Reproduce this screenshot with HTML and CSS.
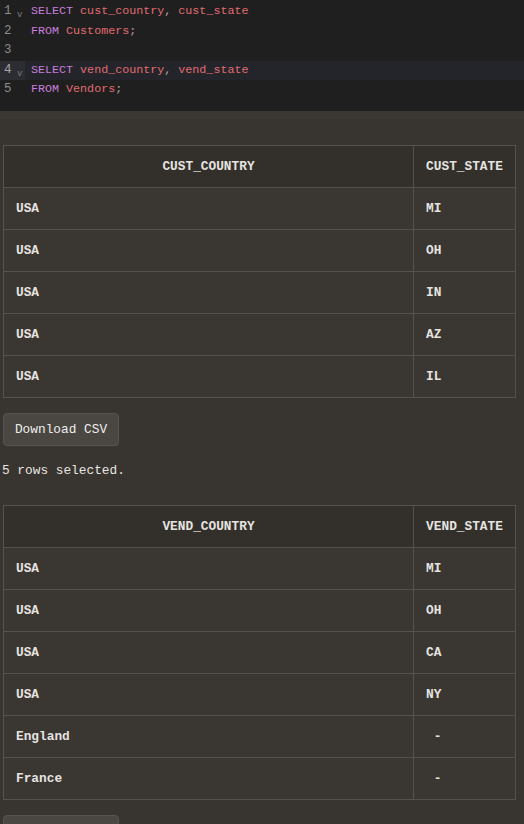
FILE: index.html
```html
<!DOCTYPE html>
<html>
<head>
<meta charset="utf-8">
<link rel="stylesheet" href="styles.css">
</head>
<body>
<div class="editor">
  <div class="line"><span class="gutter"><span class="num">1</span><span class="fold">v</span></span><span class="code"><span class="kw">SELECT</span> <span class="id">cust_country</span><span class="pn">,</span> <span class="id">cust_state</span></span></div>
  <div class="line"><span class="gutter"><span class="num">2</span><span class="fold"></span></span><span class="code"><span class="kw">FROM</span> <span class="id">Customers</span><span class="pn">;</span></span></div>
  <div class="line"><span class="gutter"><span class="num">3</span><span class="fold"></span></span><span class="code"></span></div>
  <div class="line active"><span class="gutter"><span class="num">4</span><span class="fold">v</span></span><span class="code"><span class="kw">SELECT</span> <span class="id">vend_country</span><span class="pn">,</span> <span class="id">vend_state</span></span></div>
  <div class="line"><span class="gutter"><span class="num">5</span><span class="fold"></span></span><span class="code"><span class="kw">FROM</span> <span class="id">Vendors</span><span class="pn">;</span></span></div>
</div>
<div class="splitter"></div>
<main class="results">
  <table class="grid">
    <thead><tr><th>CUST_COUNTRY</th><th class="narrow">CUST_STATE</th></tr></thead>
    <tbody>
      <tr><td>USA</td><td>MI</td></tr>
      <tr><td>USA</td><td>OH</td></tr>
      <tr><td>USA</td><td>IN</td></tr>
      <tr><td>USA</td><td>AZ</td></tr>
      <tr><td>USA</td><td>IL</td></tr>
    </tbody>
  </table>
  <button class="btn">Download CSV</button>
  <div class="status">5 rows selected.</div>
  <table class="grid">
    <thead><tr><th>VEND_COUNTRY</th><th class="narrow">VEND_STATE</th></tr></thead>
    <tbody>
      <tr><td>USA</td><td>MI</td></tr>
      <tr><td>USA</td><td>OH</td></tr>
      <tr><td>USA</td><td>CA</td></tr>
      <tr><td>USA</td><td>NY</td></tr>
      <tr><td>England</td><td>&nbsp;-</td></tr>
      <tr><td>France</td><td>&nbsp;-</td></tr>
    </tbody>
  </table>
  <button class="btn">Download CSV</button>
</main>
</body>
</html>
```
FILE: styles.css
```css
html, body {
  margin: 0;
  padding: 0;
  background: #38342f;
  overflow: hidden;
}
body {
  font-family: "Liberation Mono", "DejaVu Sans Mono", monospace;
  color: #e4e2df;
}
.editor {
  background: #1f1f1f;
  padding: 2px 0 11px;
  font-size: 11.7px;
}
.line {
  display: flex;
  height: 19.6px;
  line-height: 19.6px;
}
.line.active {
  background: #24252a;
}
.gutter {
  width: 31px;
  display: flex;
  flex: none;
}
.line.active .gutter {
  background: #2b2d32;
  width: 25px;
  margin-right: 6px;
}
.num {
  width: 13px;
  padding-left: 4px;
  color: #8b8b8b;
  font-size: 12.5px;
}
.line.active .num {
  color: #a6a6a6;
}
.fold {
  color: #777a80;
  font-size: 9px;
  line-height: 26px;
  width: 8px;
}
.code {
  white-space: pre;
}
.kw { color: #c77ddb; }
.id { color: #e06c71; }
.pn { color: #b8a8a8; }
.splitter {
  height: 6px;
  background: #3a3733;
  border-bottom: 1px solid #3f3c38;
}
.results {
  padding: 27px 0 0 3px;
}
.grid {
  width: 513px;
  border-collapse: collapse;
  font-size: 12.8px;
  font-weight: bold;
  margin-bottom: 15px;
}
.grid th, .grid td {
  border: 1px solid #55514c;
  padding: 12px 12px;
  line-height: 17px;
  height: 17px;
  white-space: nowrap;
}
.grid th {
  background: #33302c;
  text-align: center;
  color: #e6e4e0;
}
.grid td {
  background: #3a3632;
  text-align: left;
  color: #e6e4e0;
}
.grid .narrow {
  width: 77px;
}
.btn {
  display: block;
  font-family: "Liberation Mono", "DejaVu Sans Mono", monospace;
  font-size: 12.8px;
  color: #eeeeee;
  background: #4a4642;
  border: 1px solid #57534f;
  border-radius: 4px;
  height: 33px;
  width: 116px;
  padding: 0;
  margin: 0;
}
.status {
  font-size: 12.8px;
  line-height: 16px;
  margin: 17px 0 26px;
  margin-left: -1px;
  color: #e8e6e3;
}
```
